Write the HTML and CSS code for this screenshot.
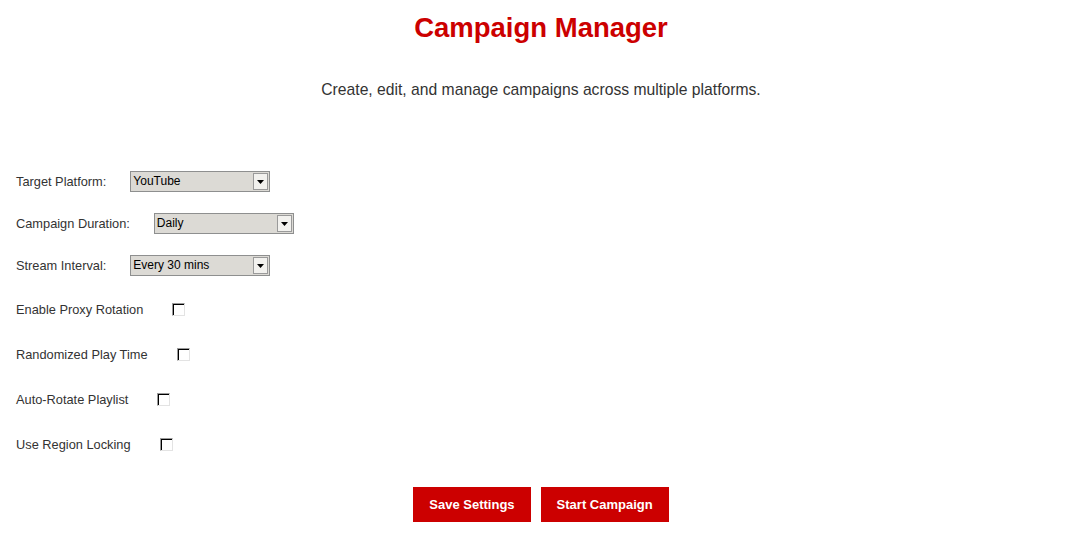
FILE: index.html
```html
<!DOCTYPE html>
<html lang="en">
<head>
<meta charset="utf-8">
<title>Campaign Manager</title>
<link rel="stylesheet" href="styles.css">
</head>
<body>
<h1 class="title">Campaign Manager</h1>
<p class="subtitle">Create, edit, and manage campaigns across multiple platforms.</p>
<form class="form">
  <div class="row row-select">
    <span class="label">Target Platform:</span>
    <div class="combo"><span class="combo-text">YouTube</span><span class="combo-btn"><svg width="7" height="4" viewBox="0 0 7 4"><path d="M0 0H7L3.5 4Z" fill="#000"/></svg></span></div>
  </div>
  <div class="row row-select">
    <span class="label">Campaign Duration:</span>
    <div class="combo"><span class="combo-text">Daily</span><span class="combo-btn"><svg width="7" height="4" viewBox="0 0 7 4"><path d="M0 0H7L3.5 4Z" fill="#000"/></svg></span></div>
  </div>
  <div class="row row-select last-select">
    <span class="label">Stream Interval:</span>
    <div class="combo"><span class="combo-text">Every 30 mins</span><span class="combo-btn"><svg width="7" height="4" viewBox="0 0 7 4"><path d="M0 0H7L3.5 4Z" fill="#000"/></svg></span></div>
  </div>
  <div class="row row-check">
    <span class="label">Enable Proxy Rotation</span><span class="check"></span>
  </div>
  <div class="row row-check">
    <span class="label">Randomized Play Time</span><span class="check"></span>
  </div>
  <div class="row row-check">
    <span class="label">Auto-Rotate Playlist</span><span class="check"></span>
  </div>
  <div class="row row-check">
    <span class="label">Use Region Locking</span><span class="check"></span>
  </div>
  <div class="actions">
    <button type="button" class="btn">Save Settings</button>
    <button type="button" class="btn">Start Campaign</button>
  </div>
</form>
</body>
</html>
```
FILE: styles.css
```css
html, body {
  margin: 0;
  padding: 0;
  background: #fff;
}
body {
  font-family: "Liberation Sans", Arial, sans-serif;
  color: #333;
  padding: 0 8px 0 16px;
}
.title {
  margin: 12px 0 0;
  font-size: 27.5px;
  line-height: 32px;
  font-weight: bold;
  color: #cc0000;
  text-align: center;
}
.subtitle {
  margin: 37px 0 0;
  font-size: 15.7px;
  line-height: 18px;
  text-align: center;
  color: #333;
}
.form {
  margin-top: 72px;
  display: flex;
  flex-direction: column;
}
.row {
  display: flex;
  align-items: center;
  height: 21px;
  font-size: 12.8px;
}
.row-select {
  margin-bottom: 21px;
}
.row-select.last-select {
  margin-bottom: 23px;
}
.row-check {
  margin-bottom: 24px;
}
.row-select .label {
  margin-right: 24px;
}
.row-check .label {
  margin-right: 29px;
}
.combo {
  display: flex;
  width: 140px;
  height: 21px;
  box-sizing: border-box;
  border: 1px solid #8e8f8f;
  background: #dcdad5;
}
.combo-text {
  flex: 1;
  font-size: 12px;
  line-height: 19px;
  color: #000;
  padding-left: 2px;
}
.combo-btn {
  width: 15px;
  margin: 1px;
  box-sizing: border-box;
  border: 1px solid #9a9a9a;
  background: #f2f1ee;
  display: flex;
  align-items: center;
  justify-content: center;
}
.check {
  width: 13px;
  height: 13px;
  box-sizing: border-box;
  border-top: 1px solid #9a9a9a;
  border-left: 1px solid #9a9a9a;
  border-right: 1px solid #e3e3e3;
  border-bottom: 1px solid #e3e3e3;
  background: #fff;
  box-shadow: inset 1px 1px 0 #000;
}
.actions {
  display: flex;
  justify-content: center;
  gap: 10px;
  margin-top: 8px;
}
.btn {
  font-family: "Liberation Sans", Arial, sans-serif;
  font-size: 13px;
  font-weight: bold;
  color: #fff;
  background: #cc0000;
  border: none;
  height: 35px;
  padding: 0 16px;
  cursor: pointer;
}
```
